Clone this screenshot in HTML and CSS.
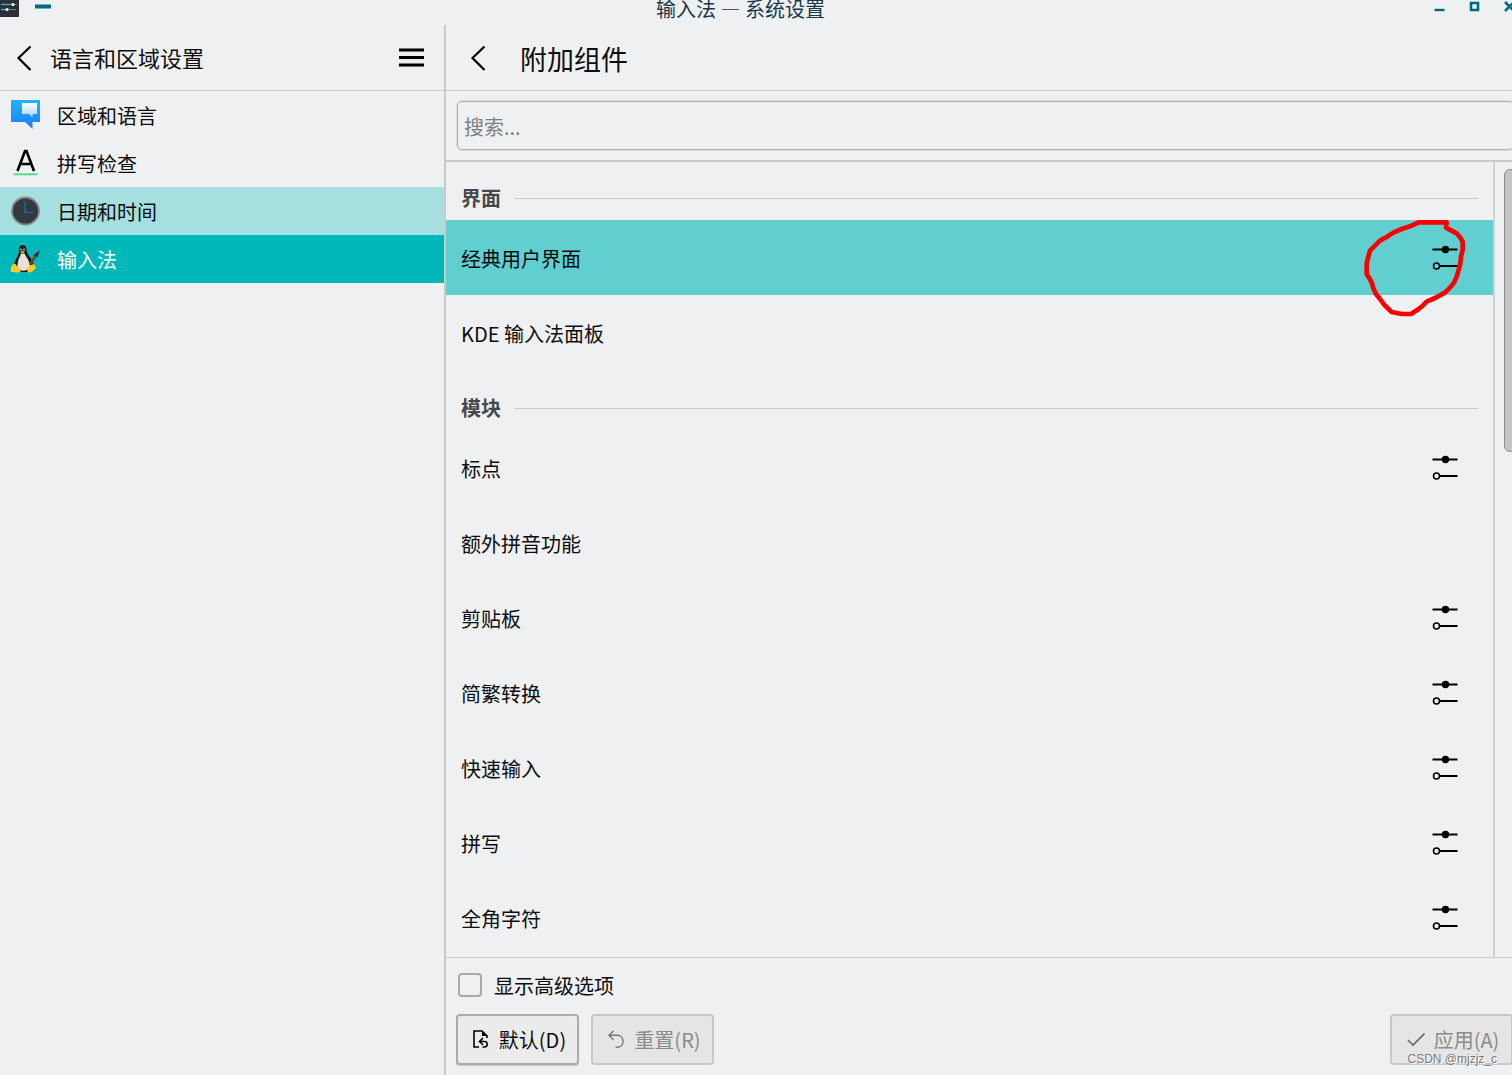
FILE: index.html
```html
<!DOCTYPE html>
<html lang="zh-CN">
<head>
<meta charset="utf-8">
<title>输入法 — 系统设置</title>
<link rel="stylesheet" href="styles.css">
</head>
<body>
<svg class="sprite" aria-hidden="true">
  <symbol id="sliders" viewBox="0 0 26 26">
    <path d="M0.500 4.500H25.500M8 21H25.500" fill="none" stroke="#000" stroke-width="1.800"/>
    <circle cx="13.500" cy="4.500" r="3.700"/>
    <circle cx="4.500" cy="21" r="3" fill="none" stroke="#000" stroke-width="1.600"/>
  </symbol>
</svg>
<div class="window">
  <header class="titlebar">
    <div class="titlebar-side">
      <svg class="app-icon" viewBox="0 0 19 17" aria-hidden="true"><rect width="19" height="17" fill="#2b3036"/><path d="M1 4.500H13" stroke="#3daee9" stroke-width="1.300"/><path d="M1 9.500H6" stroke="#3daee9" stroke-width="1.300"/><path d="M13 4.500H17M7 9.500H16" stroke="#6f767c"/><circle cx="13" cy="4.500" r="1.500" fill="#fff"/><circle cx="7" cy="9.500" r="1.500" fill="#fff"/></svg>
      <button class="win-button" aria-label="置顶"><svg width="16" height="17" viewBox="0 0 16 17"><path d="M0 6.500H16" stroke="#006a80" stroke-width="4"/></svg></button>
    </div>
    <h1 class="window-title">输入法 — 系统设置</h1>
    <div class="titlebar-side titlebar-controls">
      <button class="win-button" aria-label="最小化"><svg width="11" height="17" viewBox="0 0 11 17"><path d="M.5 10H10.500" stroke="#006a80" stroke-width="2.400"/></svg></button>
      <button class="win-button" aria-label="最大化"><svg width="11" height="17" viewBox="0 0 11 17"><path d="M2 3H9V10H2Z" fill="none" stroke="#006a80" stroke-width="2.600"/></svg></button>
      <button class="win-button" aria-label="关闭"><svg width="11" height="17" viewBox="0 0 11 17"><path d="M1 2L10 11M10 2L1 11" stroke="#006a80" stroke-width="2.600"/></svg></button>
    </div>
  </header>
  <div class="body">
    <aside class="sidebar">
      <div class="pane-header">
        <button class="icon-button" aria-label="返回"><svg width="16" height="26" viewBox="0 0 16 26"><path d="M14.500 1.500L2.500 13L14.500 25" fill="none" stroke="#000" stroke-width="2.200"/></svg></button>
        <h2 class="sidebar-title">语言和区域设置</h2>
        <button class="icon-button" aria-label="菜单"><svg width="25" height="26" viewBox="0 0 25 26"><path d="M0 5H25M0 12.500H25M0 20H25" stroke="#000" stroke-width="3"/></svg></button>
      </div>
      <nav class="nav">
        <a class="nav-item" href="#region">
          <svg class="nav-icon" viewBox="0 0 30 30" aria-hidden="true"><defs><linearGradient id="blue" x1="0" y1="0" x2="0" y2="1"><stop offset="0" stop-color="#1fb5fb"/><stop offset="1" stop-color="#1c7df0"/></linearGradient><linearGradient id="pale" x1="0" y1="0" x2="0" y2="1"><stop offset="0" stop-color="#fff"/><stop offset="1" stop-color="#a5d3fb"/></linearGradient></defs><path d="M1 0H30V22H22.500V29L15 22H1Z" fill="url(#blue)"/><path d="M12 3H27V14H22.500V17.500L19 14H12Z" fill="url(#pale)"/></svg>
          <span>区域和语言</span>
        </a>
        <a class="nav-item" href="#spell">
          <svg class="nav-icon" viewBox="0 0 30 30" aria-hidden="true"><path d="M7.500 23L15 3H16.500L24 23M10.500 16H21" fill="none" stroke="#000" stroke-width="2.600"/><path d="M3.500 26.300H27.500" stroke="#56dc88" stroke-width="2"/></svg>
          <span>拼写检查</span>
        </a>
        <a class="nav-item nav-item-hover" href="#datetime">
          <svg class="nav-icon" viewBox="0 0 30 30" aria-hidden="true"><circle cx="15.500" cy="15" r="13.500" fill="#34393e" stroke="#85888c" stroke-width="1.800"/><path d="M15 5.500V16.500H23" fill="none" stroke="#1d63a8" stroke-width="1.600"/></svg>
          <span>日期和时间</span>
        </a>
        <a class="nav-item nav-item-active" href="#input" aria-current="page">
          <svg class="nav-icon" viewBox="0 0 30 30" aria-hidden="true"><path d="M12.500 1C9.500 1 8.500 3.500 9 7.500C8.500 12 4 16 4 23L8 28H20L24 22C23 14 17 12 16.500 6C16.500 2.500 15 1 12.500 1Z" fill="#17191b"/><path d="M11 9.500C10 13 7 17 7.500 23C10 28 17 28 20 23C20 17 16 13 14.500 9.500Z" fill="#e9e2d8"/><ellipse cx="11" cy="5.500" rx=".8" ry="1" fill="#ccc"/><ellipse cx="14" cy="5.500" rx=".9" ry="1" fill="#ccc"/><path d="M10 8L12.500 6.500L15 8L12.500 9.500Z" fill="#d9a63a"/><path d="M2 21L5 19.500L11 27C9 30 5 28 1 28C0 26 1 24 2 21ZM18 22L24 20L26 24C24 26 22 29 18 28.500C16.500 27 17.500 25 18 22Z" fill="#ffca28"/><path d="M20.500 20L26 11" stroke="#7a3f22" stroke-width="2.600"/><path d="M23.500 11L30 6L27.500 13.500Z" fill="#333"/></svg>
          <span>输入法</span>
        </a>
      </nav>
    </aside>
    <main class="main">
      <div class="pane-header main-header">
        <button class="icon-button" aria-label="返回"><svg width="16" height="26" viewBox="0 0 16 26"><path d="M14.500 1.500L2.500 13L14.500 25" fill="none" stroke="#000" stroke-width="2.200"/></svg></button>
        <h2 class="main-title">附加组件</h2>
      </div>
      <div class="search-bar"><input class="search" type="search" placeholder="搜索..." aria-label="搜索"></div>
      <div class="list-area">
        <div class="list">
          <section>
            <h3 class="section-title">界面</h3>
            <ul class="rows">
              <li class="row row-active"><span>经典用户界面</span><button class="icon-button" aria-label="配置 经典用户界面"><svg class="config-icon"><use href="#sliders"/></svg></button>
                <svg class="scribble" viewBox="42 117 306 294" aria-hidden="true"><path d="M290 127H206L180 139L155 147L130 158L110 171L90 182L75 197L60 212L55 230L50 250V282L60 298L66 310L70 325L78 342L90 357L103 375L125 396L155 402H183L205 388L218 377L230 365L255 354L285 338L300 323L312 308L320 290L326 270L331 250L333 230L338 210V185L330 172L320 160L303 151L288 143Z" fill="none" stroke="#fb0000" stroke-width="14" stroke-linejoin="round"/></svg>
              </li>
              <li class="row"><span>KDE 输入法面板</span></li>
            </ul>
          </section>
          <section>
            <h3 class="section-title">模块</h3>
            <ul class="rows">
              <li class="row"><span>标点</span><button class="icon-button" aria-label="配置 标点"><svg class="config-icon"><use href="#sliders"/></svg></button></li>
              <li class="row"><span>额外拼音功能</span></li>
              <li class="row"><span>剪贴板</span><button class="icon-button" aria-label="配置 剪贴板"><svg class="config-icon"><use href="#sliders"/></svg></button></li>
              <li class="row"><span>简繁转换</span><button class="icon-button" aria-label="配置 简繁转换"><svg class="config-icon"><use href="#sliders"/></svg></button></li>
              <li class="row"><span>快速输入</span><button class="icon-button" aria-label="配置 快速输入"><svg class="config-icon"><use href="#sliders"/></svg></button></li>
              <li class="row"><span>拼写</span><button class="icon-button" aria-label="配置 拼写"><svg class="config-icon"><use href="#sliders"/></svg></button></li>
              <li class="row"><span>全角字符</span><button class="icon-button" aria-label="配置 全角字符"><svg class="config-icon"><use href="#sliders"/></svg></button></li>
            </ul>
          </section>
        </div>
        <div class="scroll-track"><div class="scroll-thumb"></div></div>
      </div>
      <footer class="footer">
        <label class="advanced"><input class="checkbox" type="checkbox"><span>显示高级选项</span></label>
        <div class="actions">
          <button class="button"><svg width="18" height="20" viewBox="0 0 18 20" aria-hidden="true"><path d="M7 17H2V1H10L15 6V8" fill="none" stroke="#000" stroke-width="1.600"/><path d="M10 .5V6H16Z"/><path d="M11 8L7.500 11.500L11 15M8 11.500H13C16 11.500 16 17 12.500 17H10.500" fill="none" stroke="#000" stroke-width="1.600"/></svg>默认(D)</button>
          <button class="button" disabled><svg width="18" height="20" viewBox="0 0 18 20" aria-hidden="true"><path d="M6.500 .8L2 5.300L6.500 9.800M2 5.300H10C18 5.300 18 17.300 10 17.300H8.500" fill="none" stroke="#777" stroke-width="1.400"/></svg>重置(R)</button>
          <div class="apply">
            <button class="button" disabled><svg width="18" height="20" viewBox="0 0 18 20" aria-hidden="true"><path d="M1 10L6 15L17.500 3.500" fill="none" stroke="#666" stroke-width="1.600"/></svg>应用(A)</button>
            <span class="watermark">CSDN @mjzjz_c</span>
          </div>
        </div>
      </footer>
    </main>
  </div>
</div>
</body>
</html>
```
FILE: styles.css
```css
* { box-sizing: border-box; }

body {
  margin: 0;
  overflow: hidden;
  background: #eff0f1;
  color: #0c0d0e;
  font: 20px/28px "Noto Sans CJK SC", "Noto Sans", sans-serif;
}

h1, h2, h3, ul { margin: 0; padding: 0; font-weight: 400; }
button { font: inherit; color: inherit; }
svg { display: block; flex: none; }
.sprite { position: absolute; width: 0; height: 0; }

/* The window runs slightly past the right edge of the screen. */
.window {
  display: flex;
  flex-direction: column;
  width: calc(100% + 12px);
  height: 100vh;
}

.titlebar {
  display: flex;
  align-items: flex-start;
  height: 25px;
  flex: none;
}
.titlebar-side { display: flex; flex: 1; gap: 16px; }
.titlebar-controls { justify-content: flex-end; gap: 24px; padding-right: 9px; }
.app-icon { width: 19px; height: 17px; }
.win-button, .icon-button { padding: 0; border: 0; background: none; }
.window-title { font-size: 20px; line-height: 17px; color: #17384c; margin-right: 34px; }

.body { display: flex; flex: 1; min-height: 0; }

.sidebar { width: 446px; flex: none; border-right: 2px solid #c8c9ca; }
.pane-header {
  display: flex;
  align-items: center;
  height: 66px;
  flex: none;
  padding: 0 20px 0 16px;
  border-bottom: 1px solid #c8c9ca;
}
.sidebar-title { flex: 1; margin-left: 18px; padding-bottom: 2px; font-size: 22px; line-height: 32px; }
.main-header { padding-left: 24px; }
.main-title { margin-left: 34px; padding-top: 2px; font-size: 27px; line-height: 40px; }

.nav-item {
  display: flex;
  align-items: center;
  gap: 17px;
  height: 48px;
  padding-left: 10px;
  color: inherit;
  text-decoration: none;
}
.nav-item span, .row span, .advanced span { padding-top: 2px; }
.nav-icon { width: 30px; height: 30px; }
.nav-item-hover { background: #a6dfdf; }
.nav-item-active { background: #00b8ba; color: #fff; }

.main { display: flex; flex: 1; flex-direction: column; min-width: 0; }
.search-bar { padding: 10px 10px 10px 11px; border-bottom: 2px solid #c8c9ca; }
.search {
  display: block;
  width: 100%;
  height: 49px;
  padding: 2px 6px 0;
  border: 1px solid #aeafb0;
  border-radius: 5px;
  background: transparent;
  box-shadow: 0 0 0 1px #dcddde;
  font: inherit;
  appearance: none;
}
.search::placeholder { color: #7f8081; }

.list-area { display: flex; flex: 1; min-height: 0; }
.list {
  display: flex;
  flex: 1;
  flex-direction: column;
  gap: 2px;
  overflow: hidden;
}
.section-title {
  display: flex;
  align-items: center;
  gap: 14px;
  height: 58px;
  padding: 14px 15px 0;
  color: #47484a;
  font-size: 20px;
  font-weight: 700;
}
.section-title::after { content: ""; flex: 1; height: 1px; background: #c8c9ca; }
.rows { list-style: none; }
.row {
  position: relative;
  display: flex;
  align-items: center;
  justify-content: space-between;
  height: 75px;
  padding: 0 35px 0 15px;
}
.row-active { background: #61cfcf; }
.config-icon { width: 26px; height: 26px; }
.scribble { position: absolute; z-index: 1; top: -1px; right: 27px; width: 102px; height: 98px; }

.scroll-track { width: 31px; padding: 7px 9px; border-left: 2px solid #d0d1d2; }
.scroll-thumb {
  width: 12px;
  height: 283px;
  border: 1px solid #8b8c8d;
  border-radius: 6px;
  background: #c4c5c5;
}

.footer { padding: 12px 11px 10px 10px; border-top: 1px solid #c8c9ca; }
.advanced { display: flex; align-items: center; gap: 12px; width: fit-content; padding-left: 2px; }
.checkbox {
  width: 24px;
  height: 24px;
  margin: 0;
  border: 2px solid #aaabac;
  border-radius: 4px;
  appearance: none;
}
.actions { display: flex; gap: 12px; margin-top: 14px; }
.button {
  display: flex;
  align-items: center;
  justify-content: center;
  gap: 9px;
  width: 123px;
  height: 51px;
  padding: 0 0 0 3px;
  border: 2px solid #aaabac;
  border-radius: 4px;
  background: #ebebeb;
  box-shadow: 0 1px 1px #c4c5c6;
  white-space: nowrap;
}
.button:disabled { border-color: #c6c7c8; background: #e5e5e5; box-shadow: none; color: #8a8b8c; }
.apply { position: relative; margin-left: auto; }
.watermark {
  position: absolute;
  right: 16px;
  bottom: -1px;
  color: #77787a;
  font: 12px/14px "Liberation Sans", sans-serif;
  text-shadow: 1px 1px #fff;
  white-space: nowrap;
}
```
